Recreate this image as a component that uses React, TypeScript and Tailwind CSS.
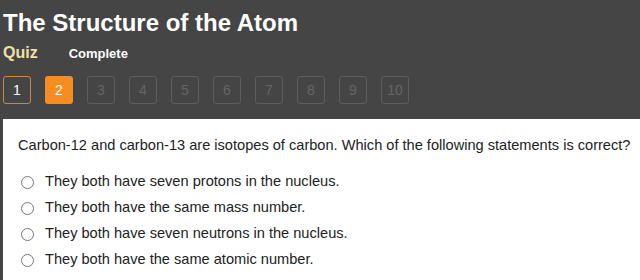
import React from "react";

const options = [
  "They both have seven protons in the nucleus.",
  "They both have the same mass number.",
  "They both have seven neutrons in the nucleus.",
  "They both have the same atomic number.",
];

export default function App() {
  const nums = [1, 2, 3, 4, 5, 6, 7, 8, 9, 10];
  return (
    <div
      className="w-[640px] h-[280px] overflow-hidden bg-[#454545] flex flex-col"
      style={{ fontFamily: '"Liberation Sans", Arial, sans-serif' }}
    >
      <div className="pl-[3px] pt-[9px]">
        <h1 className="text-[24px] leading-[28px] font-bold text-white">The Structure of the Atom</h1>
        <div className="flex items-baseline mt-[6px] h-[20px]">
          <span className="text-[16px] leading-[20px] font-bold text-[#f0e0a8]">Quiz</span>
          <span className="ml-[31px] text-[13px] leading-[20px] font-bold text-white">Complete</span>
        </div>
        <div className="flex gap-[14px] mt-[13px]">
          {nums.map((n) => (
            <div
              key={n}
              className={
                n === 1
                  ? "w-[28px] h-[28px] rounded-[3px] border border-[#c78a45] text-white flex items-center justify-center text-[14px]"
                  : n === 2
                  ? "w-[28px] h-[28px] rounded-[3px] bg-[#f58d22] text-white flex items-center justify-center text-[14px]"
                  : "w-[28px] h-[28px] rounded-[3px] border border-[#5e5e5e] text-[#666666] flex items-center justify-center text-[14px]"
              }
            >
              {n}
            </div>
          ))}
        </div>
      </div>
      <div className="ml-[3px] mt-[15px] flex-1 bg-white pl-[15px] pt-[17px]">
        <p className="text-[14.6px] leading-[18px] text-[#222222]">
          Carbon-12 and carbon-13 are isotopes of carbon. Which of the following statements is correct?
        </p>
        <div className="mt-[15px] flex flex-col">
          {options.map((o) => (
            <label key={o} className="flex items-center h-[26px] text-[14.6px] text-[#222222]">
              <span className="ml-[3px] w-[13px] h-[13px] rounded-full border border-[#767676] bg-white"></span>
              <span className="ml-[11px]">{o}</span>
            </label>
          ))}
        </div>
      </div>
    </div>
  );
}
